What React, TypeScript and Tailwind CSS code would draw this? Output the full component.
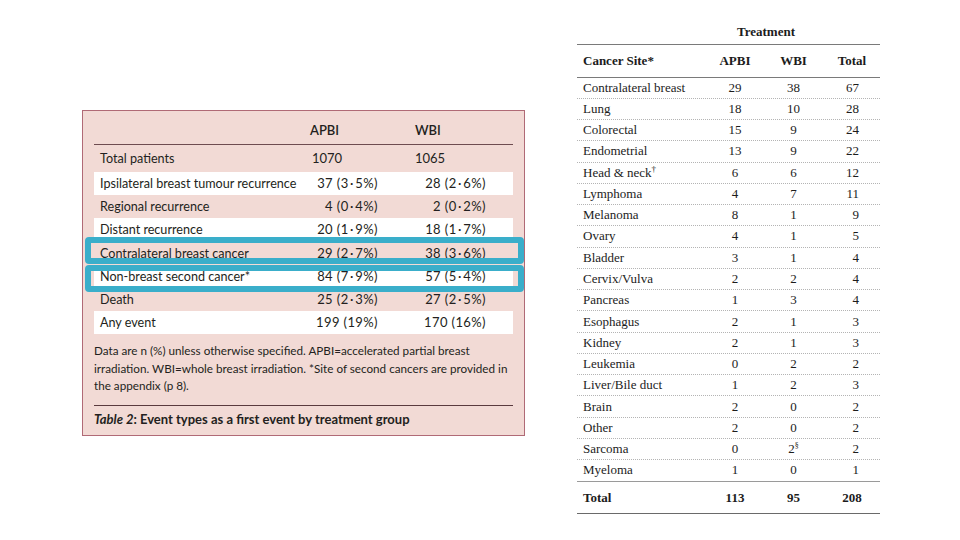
import React from 'react';

type EventRow = {
  label: string;
  apbi: string;
  wbi: string;
  white?: boolean;
  first?: boolean;
};

const eventRows: EventRow[] = [
  { label: 'Total patients', apbi: '1070', wbi: '1065', first: true },
  { label: 'Ipsilateral breast tumour recurrence', apbi: '37 (3·5%)', wbi: '28 (2·6%)', white: true },
  { label: 'Regional recurrence', apbi: '4 (0·4%)', wbi: '2 (0·2%)' },
  { label: 'Distant recurrence', apbi: '20 (1·9%)', wbi: '18 (1·7%)', white: true },
  { label: 'Contralateral breast cancer', apbi: '29 (2·7%)', wbi: '38 (3·6%)' },
  { label: 'Non-breast second cancer*', apbi: '84 (7·9%)', wbi: '57 (5·4%)', white: true },
  { label: 'Death', apbi: '25 (2·3%)', wbi: '27 (2·5%)' },
  { label: 'Any event', apbi: '199 (19%)', wbi: '170 (16%)', white: true },
];

type SiteRow = {
  site: React.ReactNode;
  apbi: React.ReactNode;
  wbi: React.ReactNode;
  total: string;
};

const siteRows: SiteRow[] = [
  { site: 'Contralateral breast', apbi: '29', wbi: '38', total: '67' },
  { site: 'Lung', apbi: '18', wbi: '10', total: '28' },
  { site: 'Colorectal', apbi: '15', wbi: '9', total: '24' },
  { site: 'Endometrial', apbi: '13', wbi: '9', total: '22' },
  {
    site: (
      <>
        Head &amp; neck<sup className="text-[9px] -top-[5px]">†</sup>
      </>
    ),
    apbi: '6',
    wbi: '6',
    total: '12',
  },
  { site: 'Lymphoma', apbi: '4', wbi: '7', total: '11' },
  { site: 'Melanoma', apbi: '8', wbi: '1', total: '9' },
  { site: 'Ovary', apbi: '4', wbi: '1', total: '5' },
  { site: 'Bladder', apbi: '3', wbi: '1', total: '4' },
  { site: 'Cervix/Vulva', apbi: '2', wbi: '2', total: '4' },
  { site: 'Pancreas', apbi: '1', wbi: '3', total: '4' },
  { site: 'Esophagus', apbi: '2', wbi: '1', total: '3' },
  { site: 'Kidney', apbi: '2', wbi: '1', total: '3' },
  { site: 'Leukemia', apbi: '0', wbi: '2', total: '2' },
  { site: 'Liver/Bile duct', apbi: '1', wbi: '2', total: '3' },
  { site: 'Brain', apbi: '2', wbi: '0', total: '2' },
  { site: 'Other', apbi: '2', wbi: '0', total: '2' },
  {
    site: 'Sarcoma',
    apbi: '0',
    wbi: (
      <>
        2<sup className="text-[8px] -top-[5px]">§</sup>
      </>
    ),
    total: '2',
  },
  { site: 'Myeloma', apbi: '1', wbi: '0', total: '1' },
];

// the journal's decimal point is a middle dot with a little air round it
const Num: React.FC<{ value: string }> = ({ value }) => {
  const parts = value.split('·');
  if (parts.length === 1) return <>{value}</>;
  return (
    <>
      {parts[0]}
      <span className="px-[1.5px]">·</span>
      {parts[1]}
    </>
  );
};

const EventTable: React.FC = () => (
  <div
    className="relative mt-[110px] ml-[82px] w-[443px] h-[326px] border border-[#b06a76] bg-[#f2dad5] px-[11px] text-[#231f20]"
    style={{ fontFamily: 'Lato, "Open Sans", sans-serif' }}
  >
    {/* Header */}
    <div className="grid grid-cols-[206px_90px_123px] h-[34px] items-end pb-[5px] border-b border-[#6e4c50] text-[13px] leading-[17px] font-semibold">
      <div />
      <div className="pl-[10px]">APBI</div>
      <div className="pl-[25px]">WBI</div>
    </div>

    {eventRows.map((row) => (
      <div
        key={row.label}
        className={`grid grid-cols-[206px_90px_123px] items-center text-[13px] leading-[17px] ${
          row.first ? 'h-[27px]' : 'h-[23.2px]'
        } ${row.white ? 'bg-white' : ''}`}
      >
        <div className="pl-[6px] whitespace-nowrap text-[12.6px]">{row.label}</div>
        {row.first ? (
          <>
            <div className="pl-[12px]">{row.apbi}</div>
            <div className="pl-[25px]">{row.wbi}</div>
          </>
        ) : (
          <>
            <div className="text-right pr-[12px] whitespace-nowrap tracking-[0.4px]">
              <Num value={row.apbi} />
            </div>
            <div className="text-right pr-[27px] whitespace-nowrap tracking-[0.4px]">
              <Num value={row.wbi} />
            </div>
          </>
        )}
      </div>
    ))}

    <p className="mt-[8px] text-[11.7px] leading-[17.5px] whitespace-nowrap">
      Data are n (%) unless otherwise specified. APBI=accelerated partial breast
      <br />
      irradiation. WBI=whole breast irradiation. *Site of second cancers are provided in
      <br />
      the appendix (p 8).
    </p>
    <div className="mt-[10px] border-t border-[#5a3a3e]" />
    <div className="mt-[5px] text-[13px] leading-[17px] font-bold">
      <span className="italic">Table 2</span>: Event types as a first event by treatment group
    </div>

    {/* highlight frames */}
    <div className="absolute left-[2px] top-[126px] w-[439px] h-[27px] border-[6px] border-[#3aaeca] rounded-[4px]" />
    <div className="absolute left-[2px] top-[154px] w-[439px] h-[27px] border-[6px] border-[#3aaeca] rounded-[4px]" />
  </div>
);

const SiteTable: React.FC = () => (
  <div
    className="mt-[20px] ml-[52px] w-[303px] text-[13px] leading-[16px] text-[#1c1c1c]"
    style={{ fontFamily: '"Liberation Serif", "Times New Roman", serif' }}
  >
    <div className="h-[24.5px] border-b border-[#7a7a7a] flex items-center pl-[160px] font-bold">Treatment</div>
    <div className="grid grid-cols-[130px_56px_61px_56px] h-[33px] items-center border-b border-[#7a7a7a] font-bold">
      <div className="pl-[6px]">Cancer Site*</div>
      <div className="text-center">APBI</div>
      <div className="text-center">WBI</div>
      <div className="text-center">Total</div>
    </div>
    {siteRows.map((row, i) => (
      <div
        key={i}
        className={`grid grid-cols-[130px_56px_61px_56px] h-[21.27px] items-center border-b ${
          i === siteRows.length - 1 ? 'border-solid border-[#9a9a9a]' : 'border-dotted border-[#b4b4b4]'
        }`}
      >
        <div className="pl-[6px] whitespace-nowrap">{row.site}</div>
        <div className="text-center">{row.apbi}</div>
        <div className="text-center">{row.wbi}</div>
        <div className="text-right pr-[21px]">{row.total}</div>
      </div>
    ))}
    <div className="grid grid-cols-[130px_56px_61px_56px] h-[32px] items-center border-b-[1.5px] border-[#6a6a6a] font-bold">
      <div className="pl-[6px] pt-[2px]">Total</div>
      <div className="text-center pt-[2px]">113</div>
      <div className="text-center pt-[2px]">95</div>
      <div className="text-center pt-[2px]">208</div>
    </div>
  </div>
);

export default function App() {
  return (
    <div className="w-[960px] h-[540px] bg-white flex items-start overflow-hidden">
      <EventTable />
      <SiteTable />
    </div>
  );
}
